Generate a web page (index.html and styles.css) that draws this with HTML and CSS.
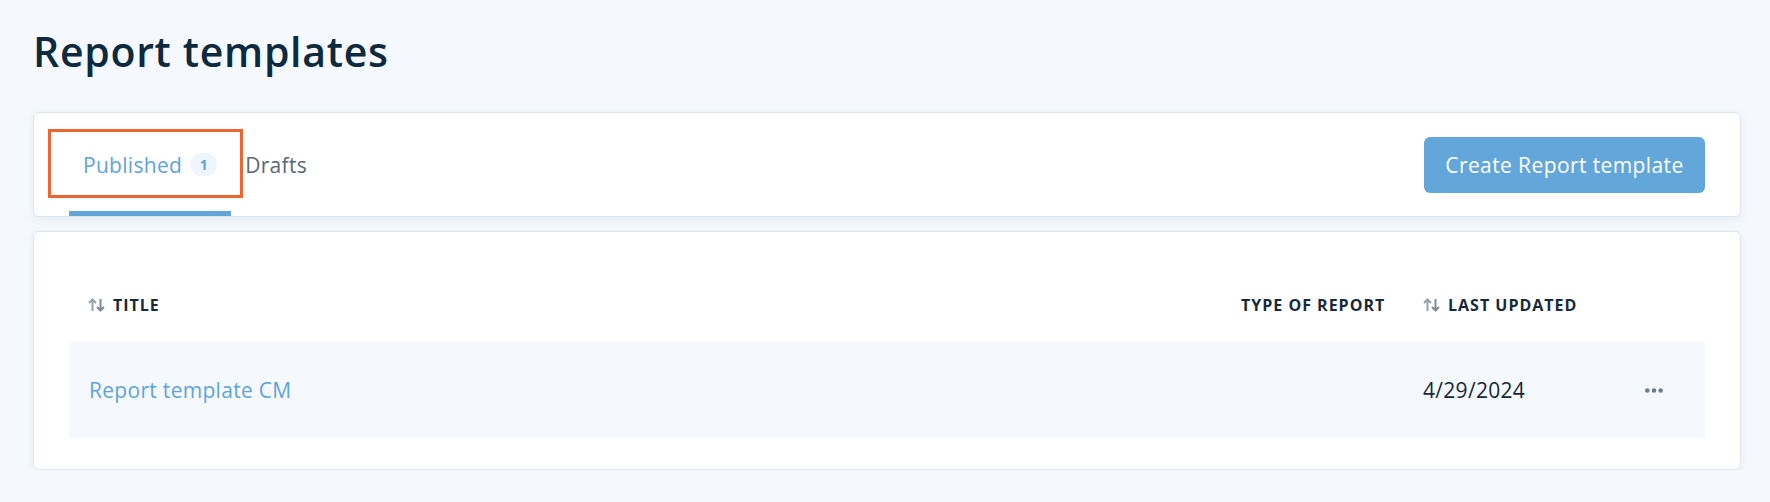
FILE: index.html
```html
<!DOCTYPE html>
<html lang="en">
<head>
<meta charset="utf-8">
<title>Report templates</title>
<link rel="stylesheet" href="styles.css">
</head>
<body>
<div class="page">
  <h1 class="page-title">Report templates</h1>

  <div class="card tabs-card">
    <div class="tabs">
      <div class="tab tab-active">
        <span class="tab-label">Published</span>
        <span class="badge">1</span>
      </div>
      <div class="tab">
        <span class="tab-label">Drafts</span>
      </div>
    </div>
    <button class="btn-primary" type="button">Create Report template</button>
    <div class="annotation"></div>
  </div>

  <div class="card table-card">
    <div class="table-head">
      <div class="th">
        <svg class="sort-icon" width="17" height="14" viewBox="0 0 17 14"><path d="M4.5 13V1.5M1 5l3.5-3.5L8 5" fill="none" stroke="#96a2ad" stroke-width="2"/><path d="M12.5 1v11.5M9 9l3.5 3.5L16 9" fill="none" stroke="#7f8b96" stroke-width="2"/></svg>
        <span>Title</span>
      </div>
      <div class="th"><span>Type of report</span></div>
      <div class="th">
        <svg class="sort-icon" width="17" height="14" viewBox="0 0 17 14"><path d="M4.5 13V1.5M1 5l3.5-3.5L8 5" fill="none" stroke="#96a2ad" stroke-width="2"/><path d="M12.5 1v11.5M9 9l3.5 3.5L16 9" fill="none" stroke="#7f8b96" stroke-width="2"/></svg>
        <span>Last updated</span>
      </div>
      <div class="th"></div>
    </div>
    <div class="table-row">
      <div class="td"><a class="row-link" href="#">Report template CM</a></div>
      <div class="td"></div>
      <div class="td td-date">4/29/2024</div>
      <div class="td td-actions">
        <svg width="18" height="5" viewBox="0 0 18 5"><circle cx="2.3" cy="2.5" r="2.3" fill="#6f7b88"/><circle cx="9" cy="2.5" r="2.3" fill="#6f7b88"/><circle cx="15.7" cy="2.5" r="2.3" fill="#6f7b88"/></svg>
      </div>
    </div>
  </div>
</div>
</body>
</html>
```

FILE: styles.css
```css
* { box-sizing: border-box; }

html, body {
  margin: 0;
  padding: 0;
  background: #f5f9fd;
  font-family: "Open Sans", Lato, "Noto Sans", sans-serif;
  color: #0d2a3e;
}

.page {
  padding: 27px 29px 0 33px;
}

.page-title {
  margin: 0 0 37px 0;
  font-size: 41px;
  line-height: 48px;
  font-weight: 600;
  letter-spacing: 0.7px;
  color: #0d2a3e;
}

.card {
  background: #ffffff;
  border: 1px solid #dfe5ec;
  border-radius: 6px;
  box-shadow: 0 3px 8px rgba(160, 180, 205, 0.18);
}

.tabs-card {
  position: relative;
  height: 105px;
  display: flex;
  align-items: stretch;
  justify-content: space-between;
  padding: 0 35px;
}

.tabs {
  display: flex;
  align-items: stretch;
  gap: 0;
}

.tab {
  display: flex;
  align-items: center;
  gap: 8px;
  padding: 0 14px;
  font-size: 21px;
  letter-spacing: 0.3px;
  color: #5a6876;
}

.tab-active {
  color: #5fa3d8;
  box-shadow: inset 0 -5px 0 #62a5d9;
}

.badge {
  display: inline-flex;
  align-items: center;
  justify-content: center;
  width: 27px;
  height: 23px;
  border-radius: 12px;
  background: #eef5fc;
  color: #5fa3d8;
  font-size: 14px;
  font-weight: 700;
  letter-spacing: 0;
}

.btn-primary {
  align-self: center;
  width: 281px;
  height: 56px;
  border: none;
  border-radius: 6px;
  background: #63a6da;
  color: #ffffff;
  font-family: "Open Sans", Lato, "Noto Sans", sans-serif;
  font-size: 21px;
  letter-spacing: 0.4px;
}

.annotation {
  position: absolute;
  left: 14px;
  top: 16px;
  width: 195px;
  height: 69px;
  border: 3px solid #ef6530;
  pointer-events: none;
}

.table-card {
  margin-top: 14px;
  padding: 36px 35px 31px 35px;
}

.table-head,
.table-row {
  display: grid;
  grid-template-columns: 1fr 182px 198px 103px;
}

.table-head {
  height: 74px;
}

.th {
  display: flex;
  align-items: center;
  gap: 8px;
  padding-left: 19px;
  font-size: 16px;
  font-weight: 700;
  text-transform: uppercase;
  letter-spacing: 1px;
  color: #172a3a;
}

.sort-icon {
  flex: none;
}

.table-row {
  height: 96px;
  background: #f5f9fd;
}

.td {
  display: flex;
  align-items: center;
  padding-left: 20px;
  font-size: 21px;
  letter-spacing: 0.3px;
  color: #15283a;
}

.row-link {
  color: #5fa3d8;
  text-decoration: none;
}

.td-date {
  padding-left: 19px;
}

.td-actions {
  padding-left: 43px;
}
```
